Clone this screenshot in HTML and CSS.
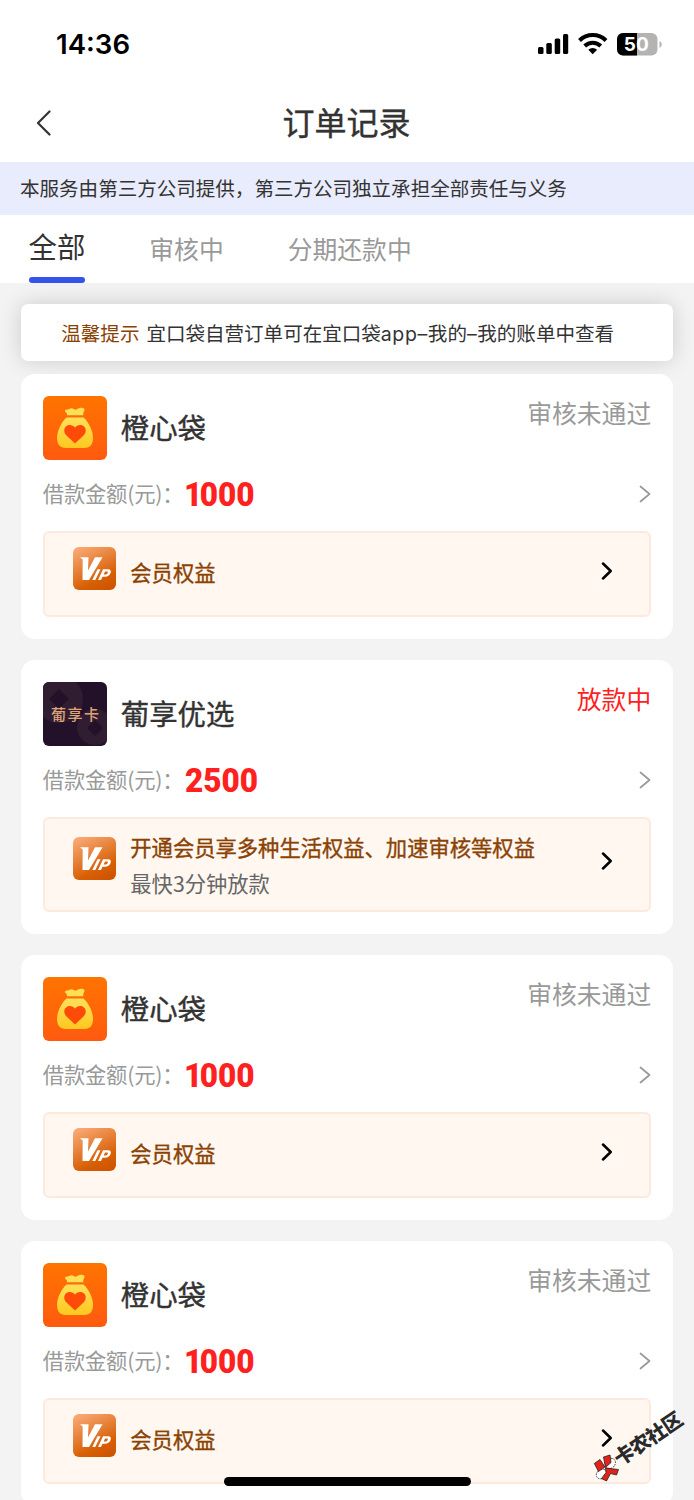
FILE: index.html
```html
<!DOCTYPE html>
<html lang="zh-CN">
<head>
<meta charset="utf-8">
<title>订单记录</title>
<link rel="stylesheet" href="styles.css">
</head>
<body>
<svg class="defs" width="0" height="0">
  <defs>
    <linearGradient id="orange" x1="0" y1="0" x2="0" y2="1"><stop offset="0" stop-color="#ff7400"/><stop offset="1" stop-color="#ff5a10"/></linearGradient>
    <linearGradient id="gold" x1="0" y1="0" x2="0" y2="1"><stop offset="0" stop-color="#ffe05a"/><stop offset="1" stop-color="#ffc81e"/></linearGradient>
    <linearGradient id="copper" x1="0.25" y1="0" x2="0.75" y2="1"><stop offset="0" stop-color="#f7a670"/><stop offset="0.75" stop-color="#d75f05"/><stop offset="1" stop-color="#cf5400"/></linearGradient>
    <symbol id="bag" viewBox="0 0 64 64">
      <rect width="64" height="64" rx="6" fill="url(#orange)"/>
      <path d="M22 14.500c1.300-1.200 2.700-.7 4-1.500 1.700-1.100 3.300-1.200 4.800 0 1.700 1.300 3 .8 4.300-.4 1.300-1.300 5-1.300 6.200.1.900 1.400-.8 3-1 4.400V19.300H24V18c0-1.300-2.800-2.400-2-3.500z" fill="#ffdf55"/>
      <path d="M23.500 21.500h17c5 4.500 9.500 13 9.500 20.500 0 6.500-3 10-8.500 10h-19c-5.500 0-8.500-3.500-8.500-10 0-7.500 4.500-16 9.500-20.500z" fill="url(#gold)"/>
      <path d="M32 47.500 23.500 39.500c-3.400-3.400-2.800-8.200 1-10 3-1.200 6 .2 7.500 2.200 1.500-2 4.500-3.400 7.500-2.200 3.800 1.800 4.400 6.600 1 10z" fill="#ff4a08"/>
    </symbol>
    <symbol id="vip" viewBox="0 0 43 43">
      <rect width="43" height="43" rx="6" fill="url(#copper)"/>
      <path d="M7 10.300h8.500L15 23.500l7-13.200h7.500L16 33H9.500L9.700 12.500z" fill="#fff"/>
      <path d="M24.500 22.300h3L22.300 33h-3zM30 22.300h5.200c2.500 0 3.200 1.800 2.300 4-1 2.300-2.800 3.500-5.200 3.500h-2.800L28 33h-3zM32 24.600l-1.300 2.900h2c1 0 1.600-.6 2-1.400.4-.9.1-1.500-.7-1.500z" fill="#fff" fill-rule="evenodd"/>
    </symbol>
    <symbol id="next" viewBox="0 0 12 18"><path d="M1.500 1.500 10.500 9l-9 7.500" fill="none" stroke="currentColor" stroke-linecap="round" stroke-linejoin="round"/></symbol>
    <symbol id="next-bold" viewBox="0 0 12 18"><path d="M2 1.500 9.700 9 2 16.500" fill="none" stroke="currentColor" stroke-linecap="round" stroke-linejoin="round"/></symbol>
  </defs>
</svg>
<div class="screen">
  <div class="status">
    <span class="clock">14:36</span>
    <svg class="signals" width="126" height="24" viewBox="0 0 126 24">
      <rect x="0" y="15" width="5.500" height="7" rx="1.500"/><rect x="8.300" y="11" width="5.500" height="11" rx="1.500"/><rect x="16.700" y="6.500" width="5.500" height="15.500" rx="1.500"/><rect x="25" y="2" width="5.200" height="20" rx="1.500"/>
      <g fill="none" stroke="#000" stroke-width="4"><path d="M41.500 8.500a19 19 0 0 1 26.500 0"/><path d="M46.700 14a11.500 11.500 0 0 1 16 0"/></g>
      <path d="M50.300 17.800a6.300 6.300 0 0 1 8.800 0l-4.400 4.400z"/>
      <rect x="79" y="1" width="40.500" height="22.500" rx="6" fill="#b3b3b3"/>
      <path d="M99 1H85a6 6 0 0 0-6 6v10.500a6 6 0 0 0 6 6h14z"/>
      <path d="M121.500 9v7c3-1.500 3-5.500 0-7z" fill="#b3b3b3"/>
      <text x="98.300" y="19" class="level" textLength="25">50</text>
    </svg>
  </div>
  <header class="nav">
    <svg class="back" width="16" height="26" viewBox="0 0 16 26"><path d="M13.500 1.500 2 13l11.500 11.500" fill="none" stroke="#333" stroke-width="2.200" stroke-linecap="round" stroke-linejoin="round"/></svg>
    <h1>订单记录</h1>
  </header>
  <div class="notice">本服务由第三方公司提供，第三方公司独立承担全部责任与义务</div>
  <nav class="tabs"><a class="tab active">全部</a><a class="tab">审核中</a><a class="tab">分期还款中</a></nav>
  <main class="list">
    <div class="tip"><b>温馨提示</b><span>宜口袋自营订单可在宜口袋<i>app–</i>我的<i>–</i>我的账单中查看</span></div>
    <section class="card">
      <div class="head"><svg class="logo"><use href="#bag"/></svg><h2>橙心袋</h2><span class="state">审核未通过</span></div>
      <div class="loan"><span>借款金额(元)：</span><strong><em>1</em>000</strong><svg class="more"><use href="#next"/></svg></div>
      <div class="perk"><svg class="vip"><use href="#vip"/></svg><div class="words"><p>会员权益</p></div><svg class="go"><use href="#next-bold"/></svg></div>
    </section>
    <section class="card">
      <div class="head">
        <svg class="logo" viewBox="0 0 64 64"><defs><clipPath id="round"><rect width="64" height="64" rx="6"/></clipPath></defs><g clip-path="url(#round)"><rect width="64" height="64" fill="#221129"/><g fill="#311d32"><path fill-rule="evenodd" d="M16-7a24 24 0 1 1 0 48 24 24 0 0 1 0-48zm0 14L6 17l10 10 10-10z"/><path fill-rule="evenodd" d="M52 27a18 18 0 1 1 0 36 18 18 0 0 1 0-36zm0 11-8 8 8 8 8-8z"/></g><g class="brand"><text x="15.500" y="38">葡</text><text x="32" y="38">享</text><text x="48.500" y="38">卡</text></g></g></svg>
        <h2>葡享优选</h2><span class="state live">放款中</span></div>
      <div class="loan"><span>借款金额(元)：</span><strong>2500</strong><svg class="more"><use href="#next"/></svg></div>
      <div class="perk tall"><svg class="vip"><use href="#vip"/></svg><div class="words"><p>开通会员享多种生活权益、加速审核等权益</p><small>最快3分钟放款</small></div><svg class="go"><use href="#next-bold"/></svg></div>
    </section>
    <section class="card">
      <div class="head"><svg class="logo"><use href="#bag"/></svg><h2>橙心袋</h2><span class="state">审核未通过</span></div>
      <div class="loan"><span>借款金额(元)：</span><strong><em>1</em>000</strong><svg class="more"><use href="#next"/></svg></div>
      <div class="perk"><svg class="vip"><use href="#vip"/></svg><div class="words"><p>会员权益</p></div><svg class="go"><use href="#next-bold"/></svg></div>
    </section>
    <section class="card">
      <div class="head"><svg class="logo"><use href="#bag"/></svg><h2>橙心袋</h2><span class="state">审核未通过</span></div>
      <div class="loan"><span>借款金额(元)：</span><strong><em>1</em>000</strong><svg class="more"><use href="#next"/></svg></div>
      <div class="perk"><svg class="vip"><use href="#vip"/></svg><div class="words"><p>会员权益</p></div><svg class="go"><use href="#next-bold"/></svg></div>
    </section>
  </main>
  <div class="home-bar"></div>
  <svg class="stamp" width="104" height="90" viewBox="0 0 104 90">
    <g stroke="#222" stroke-width=".8">
      <g fill="#fff" stroke-dasharray="1.500 1"><ellipse cx="20.500" cy="63.500" rx="5.500" ry="4.500" transform="rotate(-50 20.500 63.500)"/><ellipse cx="11.500" cy="74" rx="5.500" ry="4.500" transform="rotate(-35 11.500 74)"/></g>
      <path d="M4.300 63.500 10 59.500l5 7.500-6.500 4.500zM13.500 57l6.500-2 1 7.500-5.500 5zM15.500 68l13 1.500-2 5.500-6-1.500-4 7.500-5-2.500 4.500-6z" fill="#e2231a"/>
    </g>
    <text x="30" y="66.500" transform="rotate(-34 30 66.500)" class="stamp-text" textLength="78">卡农社区</text>
  </svg>
</div>
</body>
</html>
```
FILE: styles.css
```css
* { box-sizing: border-box; }
body { margin: 0; font-family: "Noto Sans CJK SC", sans-serif; color: #333; }
h1, h2, p { margin: 0; }
i, em { font-style: normal; }
.defs { position: absolute; }
.screen { position: relative; width: 694px; height: 1500px; overflow: hidden; background: #f3f3f3; }
.status { height: 84px; padding: 4px 30px 0 56px; background: #fff; display: flex; align-items: center; justify-content: space-between; }
.clock { font: 600 27.600px/34px Inter, sans-serif; color: #000; }
.level { font: 700 19px Inter, sans-serif; fill: #fff; text-anchor: middle; }
.nav { height: 78px; padding: 0 37px 0 36px; background: #fff; display: grid; grid-template-columns: 60px 1fr 60px; align-items: center; }
.nav h1 { padding-bottom: 4px; font-size: 32px; line-height: 40px; font-weight: 400; -webkit-text-stroke: .4px; text-align: center; }
.notice { height: 53px; padding-left: 20px; background: #e9ecfc; font-size: 19.540px; line-height: 52px; font-weight: 400; white-space: nowrap; }
.tabs { height: 68px; padding-left: 28.500px; display: flex; gap: 64px; background: #fff; }
.tab { font-size: 24.800px; line-height: 66px; font-weight: 400; color: #999; white-space: nowrap; }
.tab.active { display: flex; flex-direction: column; font-size: 28.400px; line-height: 62px; color: #333; }
.tab.active::after { content: ""; height: 6px; border-radius: 3px; background: #3453ea; }
.list { padding: 21px 21.300px 0; }
.tip { height: 57px; padding: 0 0 1px 40px; margin-bottom: 13.400px; background: #fff; border-radius: 7px; box-shadow: 0 0 22px rgba(0, 0, 0, .16); display: flex; align-items: center; gap: 7px; font-size: 19.540px; white-space: nowrap; }
.tip b { font-weight: 400; color: #8a4204; }
.tip i { font-family: Inter, sans-serif; letter-spacing: .6px; }
.card { position: relative; margin-bottom: 21.500px; padding: 21.500px; background: #fff; border-radius: 14px; }
.head { display: flex; align-items: center; height: 64px; }
.logo { width: 64px; height: 64px; margin-right: 14px; }
.head h2 { padding-bottom: 2px; font-size: 28.400px; line-height: 40px; font-weight: 400; -webkit-text-stroke: .4px; }
.brand { font: 500 15px "Noto Sans CJK SC", sans-serif; fill: #dfa478; text-anchor: middle; }
.state { margin-left: auto; align-self: flex-start; font-size: 24.800px; line-height: 33px; font-weight: 400; color: #999; }
.state.live { color: #ff1f1f; }
.loan { display: flex; align-items: center; height: 71px; padding-bottom: 2px; font-size: 21.300px; font-weight: 400; color: #999; white-space: nowrap; }
.loan span { width: 142px; padding-bottom: 4px; letter-spacing: -.200px; }
.loan strong { padding-top: 2px; font: 900 33.500px/40px Roboto, sans-serif; color: #ff2020; transform: scaleX(.94); transform-origin: left; }
.loan em { margin-left: -1px; letter-spacing: -2.800px; }
.more { margin-left: auto; width: 12px; height: 18px; stroke-width: 1.700; color: #999; }
.perk { display: flex; align-items: flex-start; height: 86.500px; padding: 14px 36px 0 28.500px; background: #fff7f0; border: 2px solid #fee9de; border-radius: 6px; }
.perk.tall { height: 95.500px; padding-top: 18px; }
.vip { width: 43px; height: 43px; margin-right: 14px; flex: none; }
.words { padding-top: 9px; }
.tall .words { padding-top: 0; margin-top: -6px; }
.words p { font-size: 21.300px; line-height: 32px; font-weight: 400; -webkit-text-stroke: .35px; color: #8a4204; white-space: nowrap; }
.words small { display: block; margin-top: 4px; font-size: 21.300px; line-height: 32px; font-weight: 400; color: #666; }
.go { width: 12px; height: 18px; margin: 15px 0 0 auto; stroke-width: 2.500; color: #000; }
.home-bar { position: absolute; left: 224px; top: 1477px; width: 247px; height: 9px; border-radius: 5px; background: #000; }
.stamp { position: absolute; left: 590px; top: 1400px; }
.stamp-text { font: 900 20px "Noto Sans CJK SC", sans-serif; fill: #2a2a2a; stroke: #fff; stroke-width: .6px; paint-order: stroke; }
```
